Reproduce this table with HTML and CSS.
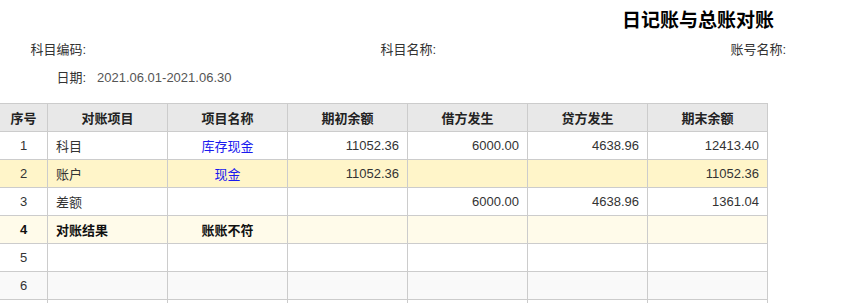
FILE: index.html
```html
<!DOCTYPE html>
<html lang="zh-CN">
<head>
<meta charset="utf-8">
<title>日记账与总账对账</title>
<link rel="stylesheet" href="styles.css">
</head>
<body>
<div class="page">
  <div class="title-bar"><h1 class="title">日记账与总账对账</h1></div>
  <div class="info-row">
    <div class="field"><span class="label">科目编码:</span><span class="value"></span></div>
    <div class="field"><span class="label">科目名称:</span><span class="value"></span></div>
    <div class="field"><span class="label">账号名称:</span><span class="value"></span></div>
  </div>
  <div class="info-row">
    <div class="field"><span class="label">日期:</span><span class="value">2021.06.01-2021.06.30</span></div>
  </div>
  <table class="grid">
    <colgroup>
      <col class="c-no"><col class="c-w"><col class="c-w"><col class="c-w"><col class="c-w"><col class="c-w"><col class="c-w">
    </colgroup>
    <thead>
      <tr><th>序号</th><th>对账项目</th><th>项目名称</th><th>期初余额</th><th>借方发生</th><th>贷方发生</th><th>期末余额</th></tr>
    </thead>
    <tbody>
      <tr><td class="ctr">1</td><td>科目</td><td class="ctr"><a class="link">库存现金</a></td><td class="num">11052.36</td><td class="num">6000.00</td><td class="num">4638.96</td><td class="num">12413.40</td></tr>
      <tr class="hl"><td class="ctr">2</td><td>账户</td><td class="ctr"><a class="link">现金</a></td><td class="num">11052.36</td><td class="num"></td><td class="num"></td><td class="num">11052.36</td></tr>
      <tr><td class="ctr">3</td><td>差额</td><td></td><td></td><td class="num">6000.00</td><td class="num">4638.96</td><td class="num">1361.04</td></tr>
      <tr class="result"><td class="ctr">4</td><td>对账结果</td><td class="ctr">账账不符</td><td></td><td></td><td></td><td></td></tr>
      <tr><td class="ctr">5</td><td></td><td></td><td></td><td></td><td></td><td></td></tr>
      <tr class="alt"><td class="ctr">6</td><td></td><td></td><td></td><td></td><td></td><td></td></tr>
      <tr><td></td><td></td><td></td><td></td><td></td><td></td><td></td></tr>
    </tbody>
  </table>
</div>
</body>
</html>
```
FILE: styles.css
```css
html, body {
  margin: 0;
  padding: 0;
  background: #fff;
}
body {
  font-family: "Liberation Sans", "Noto Sans CJK SC", sans-serif;
  font-size: 13px;
  color: #333;
}
.page {
  width: 846px;
  overflow: hidden;
}
.title-bar {
  display: flex;
  padding: 8px 0 0 622px;
  height: 28px;
}
.title {
  margin: 0;
  font-size: 19px;
  font-weight: bold;
  line-height: 26px;
  color: #000;
  white-space: nowrap;
}
.info-row {
  display: flex;
  height: 28px;
  line-height: 28px;
  white-space: nowrap;
}
.field {
  display: flex;
  flex: 0 0 350px;
}
.label {
  flex: 0 0 86px;
  text-align: right;
  color: #333;
}
.value {
  padding-left: 11px;
  color: #555;
}
.grid {
  margin: 11px 0 0 -1px;
  border-collapse: separate;
  border-spacing: 0;
  table-layout: fixed;
  width: 769px;
  border-top: 1px solid #ccc;
  border-left: 1px solid #ccc;
}
.c-no { width: 48px; }
.c-w { width: 120px; }
.grid th, .grid td {
  box-sizing: border-box;
  height: 28px;
  padding: 0 8px;
  border-right: 1px solid #ccc;
  border-bottom: 1px solid #ccc;
  white-space: nowrap;
  overflow: hidden;
}
.grid th {
  background: #e8e8e8;
  font-weight: bold;
  color: #222;
  text-align: center;
}
.grid td { text-align: left; }
.grid td.ctr { text-align: center; }
.grid td.num { text-align: right; }
.link { color: #1a1aee; }
.hl td { background: #fff5c9; }
.result td { background: #fffbea; font-weight: bold; color: #111; }
.alt td { background: #f9f9f9; }
```
